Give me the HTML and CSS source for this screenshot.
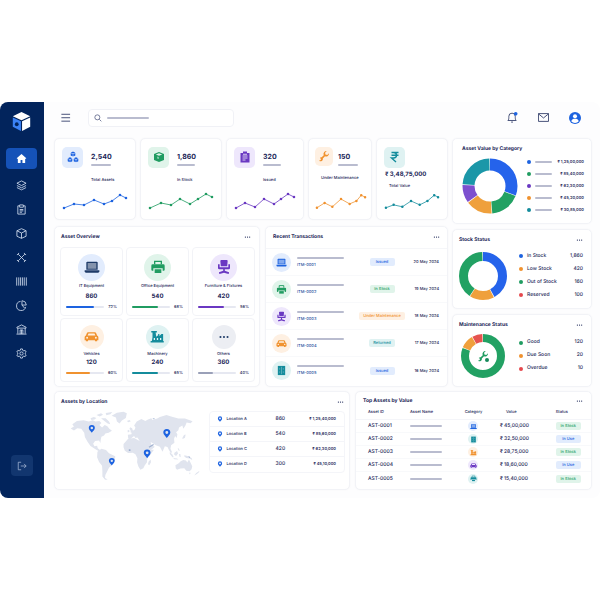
FILE: index.html
```html
<!DOCTYPE html>
<html lang="en">
<head>
    <meta charset="UTF-8">
    <meta name="viewport" content="width=device-width, initial-scale=1.0">
    <title>Asset Dashboard</title>
    <link rel="stylesheet" href="styles.css">
</head>
<body>
    <!-- Icon definitions -->
    <svg class="icon-defs" aria-hidden="true">
        <symbol id="i-laptop" viewBox="0 0 24 24">
            <path fill="currentColor" d="M5 4h14a1.500 1.500 0 0 1 1.500 1.500V16h-17V5.500A1.500 1.500 0 0 1 5 4z"/>
            <path class="icon-screen" d="M5.500 6h13v8.500h-13z"/>
            <path fill="currentColor" d="M1 17h22v1.500a2 2 0 0 1-2 2H3a2 2 0 0 1-2-2z"/>
        </symbol>
        <symbol id="i-printer" viewBox="0 0 24 24">
            <path fill="none" stroke="currentColor" stroke-width="2" d="M7 8V3.500h10V8"/>
            <path fill="currentColor" d="M4 8h16a2 2 0 0 1 2 2v6a1.500 1.500 0 0 1-1.500 1.500H19V14H5v3.500H3.500A1.500 1.500 0 0 1 2 16v-6a2 2 0 0 1 2-2z"/>
            <path fill="currentColor" d="M7 15.500h10V21H7z"/>
        </symbol>
        <symbol id="i-chair" viewBox="0 0 24 24">
            <path fill="currentColor" d="M8 1.500h8a1.500 1.500 0 0 1 1.500 1.500l-.7 8H7.200L6.500 3A1.500 1.500 0 0 1 8 1.500zM3 8h2.500v4.500h13V8H21v5.500a2 2 0 0 1-2 2h-5.800v2.300l6.300 2.200v2.200h-2.200L12 20.500l-5.300 1.700H4.500V20l6.300-2.200v-2.300H5a2 2 0 0 1-2-2z"/>
        </symbol>
        <symbol id="i-car" viewBox="0 0 24 24">
            <path fill="currentColor" fill-rule="evenodd" d="M6.500 5h11a2 2 0 0 1 1.800 1.200l1.700 4.300a3 3 0 0 1 2 2.800V18h-2v1.500h-3.500V18h-11v1.500H3V18H1v-4.700a3 3 0 0 1 2-2.800l1.700-4.300A2 2 0 0 1 6.500 5zm.7 2-1.400 3.500h12.400L16.800 7zM5 12.500a1.500 1.500 0 1 0 0 3 1.500 1.500 0 0 0 0-3zm14 0a1.500 1.500 0 1 0 0 3 1.500 1.500 0 0 0 0-3z"/>
        </symbol>
        <symbol id="i-factory" viewBox="0 0 24 24">
            <path fill="currentColor" fill-rule="evenodd" d="M2 3h9v2.500H9l1 7 3-2.500V8h2v3l3-2.500V8h3v11h1v2.500H1V19h2l1-6V5.500H2zm4 11.500v3h2v-3zm5 0v3h2v-3zm5 0v3h2v-3z"/>
        </symbol>
        <symbol id="i-cabinet" viewBox="0 0 24 24">
            <path fill="currentColor" d="M4 2h16v20H4z"/>
            <path fill="none" stroke="#fff" stroke-opacity=".5" stroke-width="1.200" d="M12 4v16M8 7v3M8 14v3M16 7v3M16 14v3"/>
        </symbol>
        <symbol id="i-dots" viewBox="0 0 24 24">
            <circle cx="3.500" cy="12" r="2.500" fill="currentColor"/>
            <circle cx="12" cy="12" r="2.500" fill="currentColor"/>
            <circle cx="20.500" cy="12" r="2.500" fill="currentColor"/>
        </symbol>
        <symbol id="i-wrench" viewBox="0 0 24 24">
            <path fill="currentColor" d="M22 6.500a6 6 0 0 1-8 6.200l-4.300 4.500a4.300 4.300 0 0 1-7.500 3.800l3.300-.8.300-2.500-2.300-1.500a4.300 4.300 0 0 1 3.800-1.500l4.200-4.200A6 6 0 0 1 17.500 2l-3.300 3.500.6 3.700 3.700.6z"/>
        </symbol>
        <symbol id="i-pin" viewBox="0 0 24 24">
            <path fill="currentColor" fill-rule="evenodd" d="M12 1a8.500 8.500 0 0 1 8.500 8.500C20.500 15 15 18 12 23 9 18 3.500 15 3.500 9.500A8.500 8.500 0 0 1 12 1zm0 5a3.500 3.500 0 1 0 0 7 3.500 3.500 0 0 0 0-7z"/>
        </symbol>
        <symbol id="i-block" viewBox="0 0 24 24">
            <path fill="currentColor" d="m12 1 10 4.500-10 4.500L2 5.500zM1.500 7.500 11 12v11l-9.500-4.500zM22.500 7.500 13 12v11l9.500-4.500z"/>
        </symbol>
    </svg>

    <div class="shell">
        <aside class="sidebar">
            <svg class="logo" viewBox="0 0 24 26">
                <path fill="#fff" d="M12 1 23 6.500 12 11.500 1 6.500z"/>
                <path fill="#3b82f6" d="M1 8 11.300 12.800V25L1 19.500z"/>
                <path fill="#fff" d="M23 8 12.700 12.800V25L23 19.500z"/>
                <circle cx="6" cy="16.500" r="2.400" fill="#02245c"/>
            </svg>
            <nav class="nav">
                <a href="#" class="nav-item active" aria-label="Home">
                    <svg viewBox="0 0 24 24"><path fill="#fff" d="M12 2 1.500 11.500 3 13l1-.8V21a1 1 0 0 0 1 1h5v-7h4v7h5a1 1 0 0 0 1-1v-8.800l1 .8 1.500-1.500z"/></svg>
                </a>
                <a href="#" class="nav-item" aria-label="Layers">
                    <svg viewBox="0 0 24 24"><path d="m12 2 10 5-10 5L2 7zM2 12l10 5 10-5M2 16.500l10 5 10-5"/></svg>
                </a>
                <a href="#" class="nav-item" aria-label="Records">
                    <svg viewBox="0 0 24 24"><path d="M8 4H4v18h16V4h-4M8 2h8v5H8zM8 12h8M8 15h8M8 18h5"/></svg>
                </a>
                <a href="#" class="nav-item" aria-label="Inventory">
                    <svg viewBox="0 0 24 24"><path d="m12 1.500 10 4.500v12l-10 4.500L2 18V6zM2 6l10 5 10-5M12 11v11.500"/></svg>
                </a>
                <a href="#" class="nav-item" aria-label="Maintenance">
                    <svg viewBox="0 0 24 24"><path d="m5 5 14 14M19 5 5 19M2 6l3-1 1-3M22 6l-3-1-1-3M2 18l3 1 1 3M22 18l-3 1-1 3"/></svg>
                </a>
                <a href="#" class="nav-item" aria-label="Barcodes">
                    <svg viewBox="0 0 24 24"><path d="M1.500 3v18M6 3v18M10 3v18M14 3v18M18 3v18M22.500 3v18"/></svg>
                </a>
                <a href="#" class="nav-item" aria-label="Reports">
                    <svg viewBox="0 0 24 24"><path d="M10 3a10 10 0 1 0 11 12M13 1.500V11h9.500A10 10 0 0 0 13 1.500zM13 11l6 7"/></svg>
                </a>
                <a href="#" class="nav-item" aria-label="Departments">
                    <svg viewBox="0 0 24 24"><path d="m2 7 10-5 10 5v2H2zM4 9v12M20 9v12M1 22h22M9 22V13h6v9M12 13v9"/></svg>
                </a>
                <a href="#" class="nav-item" aria-label="Settings">
                    <svg viewBox="0 0 24 24"><path d="m10 2-.6 3-2.500 1.300L4 5.200 1.800 8.800 4 11v2l-2.200 2.200L4 18.800l2.900-1.100L9.400 19l.6 3h4l.6-3 2.500-1.300 2.900 1.100 2.200-3.600L20 13v-2l2.200-2.200L20 5.200l-2.900 1.100L14.600 5 14 2z"/><circle cx="12" cy="12" r="3.500"/></svg>
                </a>
            </nav>
            <button class="logout" aria-label="Log out">
                <svg viewBox="0 0 24 24"><path d="M10 3H3v18h7M9 12h13M17 7l5 5-5 5"/></svg>
            </button>
        </aside>

        <main class="main">
            <header class="topbar">
                <button class="icon-btn" aria-label="Menu">
                    <svg viewBox="0 0 24 24"><path d="M3 5h19M3 12.500h19M3 20h19"/></svg>
                </button>
                <label class="search">
                    <svg viewBox="0 0 24 24"><circle cx="10" cy="10" r="7.500"/><path d="m16 16 6 6"/></svg>
                    <span class="line w-42"></span>
                    <input type="search" aria-label="Search">
                </label>
                <div class="topbar-actions">
                    <button class="icon-btn" aria-label="Notifications">
                        <svg viewBox="0 0 24 24"><path d="M2 18.500c2-2 2-5 2-9a7 7 0 0 1 14 0c0 4 0 7 2 9zM9 22h4"/><circle class="alert" cx="19" cy="4" r="4"/></svg>
                    </button>
                    <button class="icon-btn" aria-label="Messages">
                        <svg viewBox="0 0 24 24"><path d="M1 3.500h22v17H1zM1 4l11 9L23 4"/></svg>
                    </button>
                    <button class="icon-btn avatar" aria-label="Account">
                        <svg viewBox="0 0 24 24"><circle cx="12" cy="12" r="12" fill="#1d63e0"/><circle cx="12" cy="8.500" r="4" fill="#fff"/><path fill="#fff" d="M4.500 18.500c1-4 4-5 7.500-5s6.500 1 7.500 5a10 10 0 0 1-15 0z"/></svg>
                    </button>
                </div>
            </header>

            <div class="upper">
                <div class="col">
                    <!-- Summary cards -->
                    <section class="stats">
                        <div class="card stat blue">
                            <div class="stat-top">
                                <span class="stat-icon"><svg viewBox="0 0 48 48"><use href="#i-block" x="13" y="1" width="22" height="22"/><use href="#i-block" x="1" y="24" width="22" height="22"/><use href="#i-block" x="25" y="24" width="22" height="22"/></svg></span>
                                <div><strong>2,540</strong><span class="line w-20"></span></div>
                            </div>
                            <p>Total Assets</p>
                            <svg class="spark" viewBox="0 0 66 18">
                                <polyline points="2,16 12,12 22,13 32,8 42,12 50,9 58,3 64,6"/>
                                <path d="M2 16h0M12 12h0M22 13h0M32 8h0M42 12h0M50 9h0M58 3h0M64 6h0"/>
                            </svg>
                        </div>
                        <div class="card stat green">
                            <div class="stat-top">
                                <span class="stat-icon"><svg viewBox="0 0 24 24"><path fill="currentColor" fill-rule="evenodd" d="m12 2 10 4v12l-10 4-10-4V6zm0 2.500L5.500 7 12 9.500 18.500 7zM9 11l2 .8v4.200l-2-.8z"/></svg></span>
                                <div><strong>1,860</strong><span class="line w-18"></span></div>
                            </div>
                            <p>In Stock</p>
                            <svg class="spark" viewBox="0 0 66 18">
                                <polyline points="2,16 13,11 23,13 32,7 42,12 50,7 58,2 64,5"/>
                                <path d="M2 16h0M13 11h0M23 13h0M32 7h0M42 12h0M50 7h0M58 2h0M64 5h0"/>
                            </svg>
                        </div>
                        <div class="card stat purple">
                            <div class="stat-top">
                                <span class="stat-icon"><svg viewBox="0 0 24 24"><path fill="currentColor" d="M3 4h18v19H3zM8 1h8v5H8z"/><path stroke="#fff" stroke-width="1.500" d="M7 10h10M7 14h10M7 18h6M8 6.500h8"/></svg></span>
                                <div><strong>320</strong><span class="line w-18"></span></div>
                            </div>
                            <p>Issued</p>
                            <svg class="spark" viewBox="0 0 62 18">
                                <polyline points="2,16 11,11 21,15 30,7 40,12 47,7 54,2 60,5"/>
                                <path d="M2 16h0M11 11h0M21 15h0M30 7h0M40 12h0M47 7h0M54 2h0M60 5h0"/>
                            </svg>
                        </div>
                        <div class="card stat orange">
                            <div class="stat-top">
                                <span class="stat-icon"><svg><use href="#i-wrench"/></svg></span>
                                <div><strong>150</strong><span class="line w-20"></span></div>
                            </div>
                            <p>Under Maintenance</p>
                            <svg class="spark" viewBox="0 0 54 18">
                                <polyline points="2,16 10,11 18,15 27,7 36,12 43,9 48,3 52,5"/>
                                <path d="M2 16h0M10 11h0M18 15h0M27 7h0M36 12h0M43 9h0M48 3h0M52 5h0"/>
                            </svg>
                        </div>
                        <div class="card stat stat-value teal">
                            <span class="stat-icon"><svg viewBox="0 0 24 24"><path fill="none" stroke="currentColor" stroke-width="2.800" d="M5 3h14M5 8.500h14M9 3c8 0 8 11 0 11H5l9 8"/></svg></span>
                            <strong>₹ 3,48,75,000</strong>
                            <p>Total Value</p>
                            <svg class="spark" viewBox="0 0 58 18">
                                <polyline points="2,16 10,13 19,15 28,9 37,13 45,9 52,3 56,5"/>
                                <path d="M2 16h0M10 13h0M19 15h0M28 9h0M37 13h0M45 9h0M52 3h0M56 5h0"/>
                            </svg>
                        </div>
                    </section>

                    <div class="mid">
                        <!-- Asset overview -->
                        <section class="card overview">
                            <div class="card-head">
                                <h2>Asset Overview</h2>
                                <button class="more" aria-label="More"><svg><use href="#i-dots"/></svg></button>
                            </div>
                            <div class="tiles">
                                <div class="tile blue">
                                    <span class="round"><svg class="navy"><use href="#i-laptop"/></svg></span>
                                    <p>IT Equipment</p>
                                    <strong>860</strong>
                                    <div class="progress"><span class="track"><span class="fill" style="width: 74%"></span></span>72%</div>
                                </div>
                                <div class="tile green">
                                    <span class="round"><svg><use href="#i-printer"/></svg></span>
                                    <p>Office Equipment</p>
                                    <strong>540</strong>
                                    <div class="progress"><span class="track"><span class="fill" style="width: 68%"></span></span>68%</div>
                                </div>
                                <div class="tile purple">
                                    <span class="round"><svg><use href="#i-chair"/></svg></span>
                                    <p>Furniture &amp; Fixtures</p>
                                    <strong>420</strong>
                                    <div class="progress"><span class="track"><span class="fill" style="width: 68%"></span></span>56%</div>
                                </div>
                                <div class="tile small orange">
                                    <span class="round"><svg><use href="#i-car"/></svg></span>
                                    <p>Vehicles</p>
                                    <strong>120</strong>
                                    <div class="progress"><span class="track"><span class="fill" style="width: 64%"></span></span>60%</div>
                                </div>
                                <div class="tile small teal">
                                    <span class="round"><svg><use href="#i-factory"/></svg></span>
                                    <p>Machinery</p>
                                    <strong>240</strong>
                                    <div class="progress"><span class="track"><span class="fill" style="width: 68%"></span></span>65%</div>
                                </div>
                                <div class="tile small gray">
                                    <span class="round"><svg class="navy"><use href="#i-dots"/></svg></span>
                                    <p>Others</p>
                                    <strong>360</strong>
                                    <div class="progress"><span class="track"><span class="fill" style="width: 40%"></span></span>40%</div>
                                </div>
                            </div>
                        </section>

                        <!-- Recent transactions -->
                        <section class="card recent">
                            <div class="card-head">
                                <h2>Recent Transactions</h2>
                                <button class="more" aria-label="More"><svg><use href="#i-dots"/></svg></button>
                            </div>
                            <table class="transactions">
                                <tr>
                                    <td class="blue"><span class="round"><svg><use href="#i-laptop"/></svg></span></td>
                                    <td><span class="line w-47"></span><a href="#">ITM-0001</a></td>
                                    <td><span class="badge blue">Issued</span></td>
                                    <td>20 May 2024</td>
                                </tr>
                                <tr>
                                    <td class="green"><span class="round"><svg><use href="#i-printer"/></svg></span></td>
                                    <td><span class="line w-47"></span><a href="#">ITM-0002</a></td>
                                    <td><span class="badge green">In Stock</span></td>
                                    <td>19 May 2024</td>
                                </tr>
                                <tr>
                                    <td class="purple"><span class="round"><svg><use href="#i-chair"/></svg></span></td>
                                    <td><span class="line w-47"></span><a href="#">ITM-0003</a></td>
                                    <td><span class="badge orange">Under Maintenance</span></td>
                                    <td>18 May 2024</td>
                                </tr>
                                <tr>
                                    <td class="orange"><span class="round"><svg><use href="#i-car"/></svg></span></td>
                                    <td><span class="line w-47"></span><a href="#">ITM-0004</a></td>
                                    <td><span class="badge teal">Returned</span></td>
                                    <td>17 May 2024</td>
                                </tr>
                                <tr>
                                    <td class="teal"><span class="round"><svg><use href="#i-cabinet"/></svg></span></td>
                                    <td><span class="line w-47"></span><a href="#">ITM-0005</a></td>
                                    <td><span class="badge blue">Issued</span></td>
                                    <td>16 May 2024</td>
                                </tr>
                            </table>
                        </section>
                    </div>
                </div>

                <div class="col side">
                    <!-- Value by category -->
                    <section class="card category">
                        <h2>Asset Value by Category</h2>
                        <div class="chart-row">
                            <svg class="donut donut-lg" viewBox="0 0 56 56">
                                <g transform="rotate(-90 28 28)" stroke-width="12">
                                    <circle class="s-blue" cx="28" cy="28" r="21.500" pathLength="100" stroke-dasharray="30.600 100"/>
                                    <circle class="s-green" cx="28" cy="28" r="21.500" pathLength="100" stroke-dasharray="17.600 100" stroke-dashoffset="-31"/>
                                    <circle class="s-orange" cx="28" cy="28" r="21.500" pathLength="100" stroke-dasharray="15.600 100" stroke-dashoffset="-49"/>
                                    <circle class="s-purple" cx="28" cy="28" r="21.500" pathLength="100" stroke-dasharray="10.600 100" stroke-dashoffset="-65"/>
                                    <circle class="s-teal" cx="28" cy="28" r="21.500" pathLength="100" stroke-dasharray="23.600 100" stroke-dashoffset="-76"/>
                                </g>
                            </svg>
                            <ul class="legend">
                                <li class="blue"><i></i><span class="line w-17"></span><b>₹ 1,25,00,000</b></li>
                                <li class="green"><i></i><span class="line w-17"></span><b>₹ 85,40,000</b></li>
                                <li class="purple"><i></i><span class="line w-17"></span><b>₹ 62,30,000</b></li>
                                <li class="orange"><i></i><span class="line w-17"></span><b>₹ 45,20,000</b></li>
                                <li class="teal"><i></i><span class="line w-17"></span><b>₹ 30,85,000</b></li>
                            </ul>
                        </div>
                    </section>

                    <!-- Stock status -->
                    <section class="card stock">
                        <div class="card-head">
                            <h2>Stock Status</h2>
                            <button class="more" aria-label="More"><svg><use href="#i-dots"/></svg></button>
                        </div>
                        <div class="chart-row">
                            <svg class="donut" viewBox="0 0 48 48">
                                <g transform="rotate(-90 24 24)" stroke-width="9">
                                    <circle class="s-blue" cx="24" cy="24" r="19.500" pathLength="100" stroke-dasharray="42 100"/>
                                    <circle class="s-orange" cx="24" cy="24" r="19.500" pathLength="100" stroke-dasharray="16.600 100" stroke-dashoffset="-42.500"/>
                                    <circle class="s-green" cx="24" cy="24" r="19.500" pathLength="100" stroke-dasharray="40 100" stroke-dashoffset="-59.500"/>
                                </g>
                            </svg>
                            <ul class="legend">
                                <li class="blue"><i></i>In Stock<b>1,860</b></li>
                                <li class="orange"><i></i>Low Stock<b>420</b></li>
                                <li class="green"><i></i>Out of Stock<b>160</b></li>
                                <li class="red"><i></i>Reserved<b>100</b></li>
                            </ul>
                        </div>
                    </section>

                    <!-- Maintenance status -->
                    <section class="card maintenance">
                        <div class="card-head">
                            <h2>Maintenance Status</h2>
                            <button class="more" aria-label="More"><svg><use href="#i-dots"/></svg></button>
                        </div>
                        <div class="chart-row">
                            <svg class="donut" viewBox="0 0 48 48">
                                <g transform="rotate(-90 24 24)" stroke-width="8">
                                    <circle class="s-green" cx="24" cy="24" r="18" pathLength="100" stroke-dasharray="81 100"/>
                                    <circle class="s-orange" cx="24" cy="24" r="18" pathLength="100" stroke-dasharray="10 100" stroke-dashoffset="-81.500"/>
                                    <circle class="s-red" cx="24" cy="24" r="18" pathLength="100" stroke-dasharray="7.500 100" stroke-dashoffset="-92"/>
                                </g>
                                <use class="green" href="#i-wrench" x="18" y="18" width="12" height="12"/>
                                <circle cx="28" cy="28" r="2" fill="#16895a"/>
                            </svg>
                            <ul class="legend">
                                <li class="green"><i></i>Good<b>120</b></li>
                                <li class="orange"><i></i>Due Soon<b>20</b></li>
                                <li class="red"><i></i>Overdue<b>10</b></li>
                            </ul>
                        </div>
                    </section>
                </div>
            </div>

            <div class="lower">
                <!-- Assets by location -->
                <section class="card location">
                    <div class="card-head">
                        <h2>Assets by Location</h2>
                        <button class="more" aria-label="More"><svg><use href="#i-dots"/></svg></button>
                    </div>
                    <div class="location-body">
                        <svg class="map" viewBox="210 78 395 212">
                            <g class="land">
                                <path d="m212 131 10-6-5-7 14-10 20-2 16 4 12-4 8 4 12-2 6 6-6 6 8 8 8-8 8 4 6 8 8 6-10 6-10 2-4 6-8 4-2 10-1 9-4-8-12 2-6 8 4 8 8-2 2 8 10 7-3 4-15-9-14-9-9-13-8-14-2-13-9-12-12-2-10 7z"/>
                                <path d="m272 100 10-4 8 3-6 5-9 1zm18-10 14-5 6 4-10 6zm14 10 14 0 10 10 4 8-8-2-10-8zm14-16 20-3-6 7-12 3z"/>
                                <path d="m336 92 16-9 20-3 10 5-3 14-12 8-7 9-8-6-3-12z"/>
                                <path d="m293 201 12-9 14 4 9 10 19 9-1 12-8 14-10 9-6 12-5 10-1 9 8 4-8 1-8-10 0-16-1-16-9-12-6-14z"/>
                                <path d="m382 108 8-3 4 4-7 3zM392 127l6 3 4 12-8 2-1-8-3-4zM384 137l5-2 1 6-5 2z"/>
                                <path d="m386 160-1-10 11-2 1-8 9-6 2-6-4-6 8-12 14-8 12 6 8-4 10-4 4 5 14-4 8-5 20-6 14 5 22 6 20 0 23 8-6 6-12-2-4 10-6 9-3-10-10 6-2 8-7 6 4 6-2 12-5-6-3 8 1 12-10 8-2 10 5 11-4 2-6-10-4-8-8-2-7 16-8-15-14-5-6-5-8-4 3 10 10 4-12 10-8 2-8-18-4-9-12 0-5-7-4-6-6 2-4-6-6 4-8 8z"/>
                                <path d="m372 178 14-16 18-2 14 7 16 2 8 12 8 14 14 0-8 12-12 14-1 12-7 10-4 8-9 5-6-10-4-13 1-12-6-12-8-5-14 1-10-7-4-10z"/>
                                <path d="m448 231 6-6 1 8-5 9-4-3zM550 160l5-9 5-2-2 10-7 4zM512 202l8 8 4 8-4 0-8-10zM526 204l8-5 3 8-6 7-6-4zM522 220l12 2 4 3-12-1zM540 208l4 0 1 10-4-2zM536 190l4 2 2 8-4-3zM556 212l10 2 12 6 2 6-8-4-10-2-6-4z"/>
                                <path d="m529 242 10-6 6-6 8-4 8 2 4 6 5-9 5 10 5 10-2 9-6 6-10-1-6-8-12 1-10 4-4-5zM570 265l5 0-2 5zM592 266l8-6 2 2-8 7-8 4z"/>
                            </g>
                            <path class="spots" d="m448 186 14-8 2 3-14 8zM388 194l5 0 0 5-5 0zM568 214l6 3-3 3zM459 102l6-3 1 4z"/>
                            <g class="pins">
                                <use href="#i-pin" x="263" y="119" width="26" height="26"/>
                                <use href="#i-pin" x="488" y="131" width="30" height="30"/>
                                <use href="#i-pin" x="429" y="193" width="29" height="29"/>
                                <use href="#i-pin" x="324" y="219" width="25" height="25"/>
                            </g>
                        </svg>
                        <table class="locations">
                            <tr><td><svg><use href="#i-pin"/></svg></td><td>Location A</td><td>860</td><td>₹ 1,25,40,000</td></tr>
                            <tr><td><svg><use href="#i-pin"/></svg></td><td>Location B</td><td>540</td><td>₹ 85,60,000</td></tr>
                            <tr><td><svg><use href="#i-pin"/></svg></td><td>Location C</td><td>420</td><td>₹ 62,30,000</td></tr>
                            <tr><td><svg><use href="#i-pin"/></svg></td><td>Location D</td><td>300</td><td>₹ 45,10,000</td></tr>
                        </table>
                    </div>
                </section>

                <!-- Top assets -->
                <section class="card top-assets">
                    <div class="card-head">
                        <h2>Top Assets by Value</h2>
                        <button class="more" aria-label="More"><svg><use href="#i-dots"/></svg></button>
                    </div>
                    <table class="assets">
                        <thead>
                            <tr><th>Asset ID</th><th>Asset Name</th><th>Category</th><th>Value</th><th>Status</th></tr>
                        </thead>
                        <tbody>
                            <tr><td>AST-0001</td><td><span class="line w-32"></span></td><td class="blue"><span class="round"><svg><use href="#i-laptop"/></svg></span></td><td>₹ 45,00,000</td><td><span class="badge green">In Stock</span></td></tr>
                            <tr><td>AST-0002</td><td><span class="line w-32"></span></td><td class="teal"><span class="round"><svg><use href="#i-cabinet"/></svg></span></td><td>₹ 32,50,000</td><td><span class="badge blue">In Use</span></td></tr>
                            <tr><td>AST-0003</td><td><span class="line w-32"></span></td><td class="orange"><span class="round"><svg><use href="#i-factory"/></svg></span></td><td>₹ 28,75,000</td><td><span class="badge green">In Stock</span></td></tr>
                            <tr><td>AST-0004</td><td><span class="line w-32"></span></td><td class="purple"><span class="round"><svg><use href="#i-car"/></svg></span></td><td>₹ 18,60,000</td><td><span class="badge blue">In Use</span></td></tr>
                            <tr><td>AST-0005</td><td><span class="line w-32"></span></td><td class="teal"><span class="round"><svg><use href="#i-printer"/></svg></span></td><td>₹ 15,40,000</td><td><span class="badge green">In Stock</span></td></tr>
                        </tbody>
                    </table>
                </section>
            </div>
        </main>
    </div>
</body>
</html>
```
FILE: styles.css
```css
* {
    margin: 0;
    padding: 0;
    box-sizing: border-box;
}

body {
    min-height: 100vh;
    display: flex;
    align-items: center;
    background: #fff;
    color: #1b2657;
    font-family: Inter, "Liberation Sans", sans-serif;
    font-size: 4px;
    font-weight: 500;
    line-height: 6px;
    text-rendering: geometricPrecision;
}

button {
    background: none;
    border: none;
    color: inherit;
    font: inherit;
    cursor: pointer;
}

a {
    color: inherit;
    text-decoration: none;
}

ul {
    list-style: none;
}

table {
    width: 100%;
    border-collapse: collapse;
}

svg {
    display: block;
}

.icon-defs {
    position: absolute;
    width: 0;
    height: 0;
}

.icon-screen {
    fill: #fff;
    fill-opacity: 0.45;
}

.shell {
    display: flex;
    width: 100%;
    border-radius: 8px;
    overflow: hidden;
    background: #fdfdfe;
}

/* Colour themes */
.blue { --main: #1d63e0; --soft: #e2ecfd; }
.green { --main: #209c61; --soft: #e0f4ea; }
.purple { --main: #6a38c2; --soft: #eee7fc; }
.orange { --main: #f0922f; --soft: #fef0e2; }
.teal { --main: #148c9c; --soft: #dff2f2; }
.gray { --main: #9aa0b8; --soft: #eceef3; }
.red { --main: #e5484d; --soft: #fde8e8; }

/* Sidebar */
.sidebar {
    width: 44px;
    flex: none;
    display: flex;
    flex-direction: column;
    align-items: center;
    padding: 9px 7px 22px 6px;
    background: #02245c;
}

.logo {
    width: 19px;
    height: 21px;
}

.nav {
    width: 100%;
    display: flex;
    flex-direction: column;
    gap: 4px;
    margin-top: 16px;
}

.nav-item {
    height: 20px;
    display: flex;
    align-items: center;
    justify-content: center;
    border-radius: 4px;
}

.nav-item svg,
.logout svg {
    width: 11px;
    height: 11px;
    fill: none;
    stroke: #d5dff0;
    stroke-width: 1.8;
}

.nav-item.active {
    height: 21px;
    margin-bottom: 3px;
    background: #1552b8;
}

.nav-item.active svg {
    stroke: none;
}

.logout {
    width: 22px;
    height: 21px;
    display: flex;
    align-items: center;
    justify-content: center;
    margin-top: auto;
    border-radius: 4px;
    background: #12366f;
}

.logout svg {
    width: 10px;
    height: 10px;
    stroke: #a9bbd8;
}

/* Main area */
.main {
    flex: 1;
    min-width: 0;
    padding: 7px 8px 8px 10px;
}

.topbar {
    display: flex;
    align-items: center;
    padding: 0 11px 0 6px;
    margin-bottom: 11px;
}

.icon-btn svg {
    width: 11px;
    height: 11px;
    fill: none;
    stroke: #39446f;
    stroke-width: 2;
}

.icon-btn .alert {
    fill: #1d63e0;
    stroke: none;
}

.icon-btn.avatar svg {
    width: 12px;
    height: 12px;
    stroke: none;
}

.search {
    flex: 0 1 146px;
    height: 18px;
    display: flex;
    align-items: center;
    gap: 5px;
    margin-left: 17px;
    padding: 0 5px;
    background: #fff;
    border: 1px solid #f0f1f6;
    border-radius: 4px;
}

.search svg {
    width: 8px;
    height: 8px;
    fill: none;
    stroke: #39446f;
    stroke-width: 2;
}

.search input {
    flex: 1;
    min-width: 0;
    border: none;
    outline: none;
    background: none;
    font: inherit;
}

.topbar-actions {
    display: flex;
    align-items: center;
    gap: 20px;
    margin-left: auto;
}

/* Grey bars standing for names */
.line {
    display: block;
    height: 2px;
    border-radius: 1px;
    background: #b9bccf;
}

.w-17 { width: 17px; }
.w-18 { width: 18px; }
.w-20 { width: 20px; }
.w-32 { width: 32px; }
.w-42 { width: 42px; }
.w-47 { width: 47px; }

/* Cards */
.card {
    background: #fff;
    border: 1px solid #f2f3f7;
    border-radius: 5px;
    box-shadow: 0 0 2px rgba(27, 38, 87, 0.04);
}

.card-head {
    display: flex;
    align-items: center;
    justify-content: space-between;
}

h2 {
    font-size: 5px;
    font-weight: 700;
    line-height: 8px;
}

.more svg {
    width: 7px;
    height: 6px;
}

.upper {
    display: grid;
    grid-template-columns: 394fr 140fr;
    gap: 4px;
}

.col {
    display: flex;
    flex-direction: column;
    gap: 6px;
    min-width: 0;
}

.col.side {
    gap: 5px;
}

/* Summary cards */
.stats {
    display: grid;
    grid-template-columns: 82fr 82fr 78fr 64fr 72fr;
    gap: 4px;
}

.stat {
    display: flex;
    flex-direction: column;
    padding: 8px 7px 9px;
}

.stat-top {
    display: flex;
    gap: 8px;
}

.stat-top strong {
    display: block;
    padding: 5px 0 3px;
    font-size: 7px;
    line-height: 9px;
}

.stat-icon {
    width: 21px;
    height: 21px;
    flex: none;
    display: flex;
    align-items: center;
    justify-content: center;
    border-radius: 5px;
    background: var(--soft);
    color: var(--main);
}

.stat-icon svg {
    width: 12px;
    height: 12px;
}

.stat p {
    padding: 9px 0 4px 29px;
    white-space: nowrap;
}

.stat.orange {
    padding-left: 6px;
    padding-right: 4px;
}

.stat.orange .stat-top {
    gap: 5px;
}

.stat.orange .stat-icon {
    width: 18px;
    height: 19px;
}

.stat.orange p {
    padding-left: 6px;
}

.stat-value strong {
    padding: 3px 0 0 1px;
    font-size: 6px;
    line-height: 8px;
    white-space: nowrap;
}

.stat-value p {
    padding: 4px 0 3px 5px;
}

.spark {
    width: 100%;
    height: 18px;
    margin-top: auto;
    fill: none;
    stroke: var(--main);
    stroke-width: 0.8;
}

.spark path {
    stroke-width: 2.6;
    stroke-linecap: round;
}

/* Overview and transactions */
.mid {
    flex: 1;
    display: grid;
    grid-template-columns: 206fr 183fr;
    gap: 5px;
}

.overview {
    padding: 6px 4px 4px 5px;
}

.overview .card-head {
    padding: 0 4px 6px 1px;
}

.tiles {
    display: grid;
    grid-template-columns: repeat(3, 1fr);
    gap: 2px 3px;
}

.tile {
    padding: 6px 5px 5px;
    border: 1px solid #f2f3f7;
    border-radius: 4px;
    text-align: center;
}

.tile .round {
    width: 27px;
    height: 27px;
    margin: 0 auto 2px;
}

.tile .round svg {
    width: 16px;
    height: 16px;
}

.tile strong {
    display: block;
    margin: 4px 0 3px;
    font-size: 6px;
    line-height: 8px;
}

.tile.small .round {
    width: 24px;
    height: 24px;
}

.tile.small .round svg {
    width: 15px;
    height: 15px;
}

.tile.small strong {
    margin: 2px 0 3px;
}

.round {
    display: flex;
    align-items: center;
    justify-content: center;
    border-radius: 50%;
    background: var(--soft);
    color: var(--main);
}

.tile .round .navy {
    color: #1f3b68;
}

.tile.blue .icon-screen {
    fill: #2a9bc4;
    fill-opacity: 0.8;
}

.tile.gray .round svg {
    width: 10px;
    height: 10px;
}

.progress {
    display: flex;
    align-items: center;
    gap: 4px;
}

.track {
    flex: 1;
    height: 2px;
    border-radius: 1px;
    background: #e6e8f1;
}

.fill {
    display: block;
    height: 2px;
    border-radius: 1px;
    background: var(--main);
}

.recent .card-head {
    padding: 6px 7px 7px;
    border-bottom: 1px solid #f5f6f9;
}

.transactions td {
    height: 27px;
    border-bottom: 1px solid #f8f9fb;
    text-align: center;
}

.transactions tr:last-child td {
    border-bottom: none;
}

.transactions td:first-child {
    width: 31px;
    padding-left: 6px;
}

.transactions td:nth-child(2) {
    width: 56px;
    text-align: left;
}

.transactions td:last-child {
    width: 36px;
    padding-right: 8px;
    text-align: right;
    white-space: nowrap;
}

.transactions a {
    display: block;
    padding-top: 3px;
    color: #2a4f9e;
}

.transactions .round {
    width: 19px;
    height: 19px;
}

.transactions .round svg {
    width: 11px;
    height: 11px;
}

.badge {
    display: inline-block;
    min-width: 25px;
    padding: 1px 4px;
    border-radius: 2px;
    background: var(--soft);
    color: var(--main);
    text-align: center;
    white-space: nowrap;
}

/* Donut charts */
.chart-row {
    display: flex;
    align-items: center;
}

.donut {
    width: 48px;
    height: 48px;
    flex: none;
    fill: none;
}

.donut use {
    color: var(--main);
}

.donut-lg {
    width: 56px;
    height: 56px;
}

.s-blue { stroke: #2563eb; }
.s-green { stroke: #22a163; }
.s-orange { stroke: #efa03c; }
.s-purple { stroke: #7d50cf; }
.s-teal { stroke: #1b97a8; }
.s-red { stroke: #e5534f; }

.category {
    padding: 6px 7px 7px 9px;
}

.category .chart-row {
    padding-top: 3px;
}

.stock,
.maintenance {
    padding: 6px 8px 6px 6px;
}

.stock .chart-row {
    padding-top: 6px;
}

.maintenance .chart-row {
    padding-top: 3px;
}

.legend {
    flex: 1;
    margin-left: 12px;
}

.legend li {
    display: flex;
    align-items: center;
    font-size: 5px;
    line-height: 13px;
}

.legend i {
    width: 4px;
    height: 4px;
    margin-right: 4px;
    border-radius: 50%;
    background: var(--main);
}

.legend b {
    margin-left: auto;
    font-weight: 500;
    white-space: nowrap;
}

.category .legend {
    margin-left: 9px;
}

.category .legend li {
    font-size: 4px;
    line-height: 12px;
}

.category .legend b {
    font-weight: 600;
}

/* Bottom row */
.lower {
    display: grid;
    grid-template-columns: 296fr 237fr;
    gap: 5px;
    margin-top: 4px;
}

.location {
    padding: 6px 4px 8px 6px;
}

.location .card-head {
    padding-right: 1px;
}

.location-body {
    display: flex;
    align-items: flex-start;
    gap: 8px;
    padding: 5px 0 0 9px;
}

.map {
    flex: 132;
    min-width: 0;
}

.land {
    fill: #e0e4ee;
}

.spots {
    fill: #9fb0d0;
}

.pins {
    color: #1d63e0;
}

.locations {
    flex: 136;
    width: auto;
    border: 1px solid #f4f5f9;
    border-radius: 4px;
    border-collapse: separate;
    border-spacing: 0;
}

.locations td {
    height: 15px;
    border-bottom: 1px solid #f4f5f9;
}

.locations tr:last-child td {
    border-bottom: none;
}

.locations td:first-child {
    width: 17px;
    padding-left: 7px;
    color: #1d63e0;
}

.locations td:nth-child(2) {
    width: 49px;
}

.locations td:nth-child(3) {
    font-size: 5px;
}

.locations td:last-child {
    padding-right: 8px;
    font-weight: 600;
    text-align: right;
}

.locations svg {
    width: 6px;
    height: 6px;
}

.top-assets {
    padding: 5px 0 4px;
}

.top-assets .card-head {
    padding: 0 8px 0 7px;
}

.assets {
    table-layout: fixed;
}

.assets th {
    height: 15px;
    border-bottom: 1px solid #f4f5f9;
    font-weight: 500;
    text-align: left;
}

.assets td {
    height: 13px;
    border-bottom: 1px solid #f8f9fb;
}

.assets tbody tr:last-child td {
    border-bottom: none;
}

.assets th:first-child,
.assets td:first-child {
    width: 23%;
    padding-left: 12px;
}

.assets th:nth-child(2) { width: 20%; }
.assets th:nth-child(3) { width: 14%; text-align: center; }
.assets th:nth-child(4) { width: 28%; padding-left: 16px; }

.assets td:first-child,
.assets td:nth-child(4) {
    font-size: 5px;
}

.assets td:nth-child(4) {
    padding-left: 10px;
}

.assets .round {
    width: 10px;
    height: 10px;
    margin: 0 auto;
}

.assets .round svg {
    width: 7px;
    height: 7px;
}
```
